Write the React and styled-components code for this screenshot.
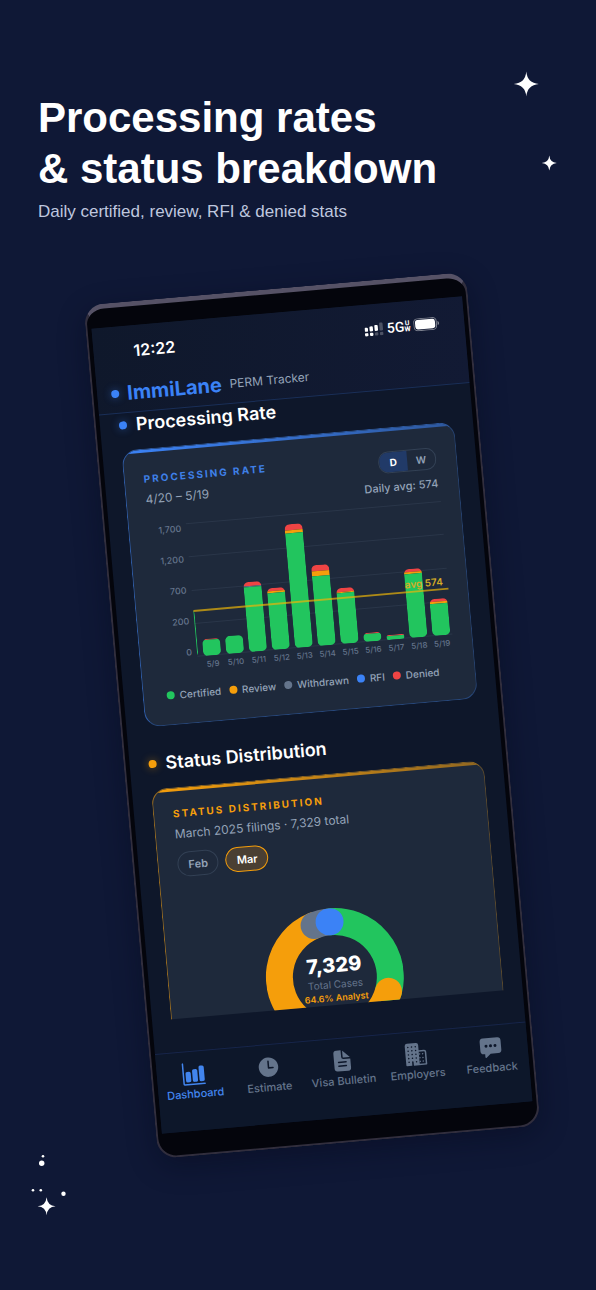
import React from "react";
import styled, { createGlobalStyle, css } from "styled-components";
import {
  IoBarChart,
  IoTime,
  IoDocumentText,
  IoBusiness,
  IoChatboxEllipses,
} from "react-icons/io5";

const c = {
  green: "#22c55e",
  amber: "#f59e0b",
  slate: "#64748b",
  blue: "#3b82f6",
  red: "#ef4444",
  muted: "#94a3b8",
};

const GlobalStyle = createGlobalStyle`
  *, *::before, *::after { box-sizing: border-box; }
  body { margin: 0; background: #0f1836; }
  button { font: inherit; margin: 0; padding: 0; border: 0; background: none; cursor: pointer; }
`;

const Page = styled.main`
  position: relative;
  min-height: 100vh;
  padding: 92px 38px 100px;
  overflow: hidden;
  background: #0f1836;
  font-family: "Liberation Sans", Arial, sans-serif;
`;

const Title = styled.h1`
  margin: 0;
  color: #fff;
  font-size: 42px;
  font-weight: 700;
  line-height: 51px;
`;

const Subtitle = styled.p`
  margin: 6px 0 0;
  color: #bfc7df;
  font-size: 17px;
  line-height: 24px;
`;

const StarsTop = styled.svg`
  position: absolute;
  top: 64px;
  right: 32px;
`;

const StarsBottom = styled.svg`
  position: absolute;
  bottom: 64px;
  left: 24px;
`;

const Stage = styled.div`
  display: flex;
  justify-content: center;
  margin-top: 63px;
  padding-left: 28px;
`;

const Phone = styled.div`
  width: 100%;
  max-width: 384px;
  padding: 19px 4px 23px;
  border: 2px solid #312e3d;
  border-top: 5px solid #565266;
  border-radius: 20px;
  background: #04050c;
  box-shadow: 0 8px 28px rgba(4, 8, 26, 0.4);
  transform: rotate(-5deg);
`;

const Screen = styled.div`
  overflow: hidden;
  background: #0e172a;
  font-family: Inter, sans-serif;
`;

const TopArea = styled.header`
  border-bottom: 1px solid #1a2f58;
  background: linear-gradient(100deg, #0f182b, #121a34);
`;

const StatusBar = styled.div`
  display: flex;
  align-items: center;
  justify-content: space-between;
  height: 49px;
  padding: 0 25px 0 40px;
  color: #fff;
`;

const Clock = styled.span`
  font-size: 16px;
  font-weight: 600;
  line-height: 20px;
`;

const StatusIcons = styled.div`
  display: flex;
  align-items: center;
  gap: 3px;
`;

const Network = styled.span`
  display: flex;
  align-items: center;
  font-family: Roboto, sans-serif;
  font-size: 14px;
  font-weight: 500;
  line-height: 16px;
`;

const NetworkBand = styled.span`
  display: flex;
  flex-direction: column;
  align-items: center;
  font-size: 7px;
  font-weight: 700;
  line-height: 6px;
`;

const Brand = styled.div`
  display: flex;
  align-items: center;
  height: 37px;
  padding: 0 14px 2px;
`;

const Dot = styled.span`
  flex: none;
  width: 8px;
  height: 8px;
  border-radius: 50%;
  background: ${(p) => p.$color};
  ${(p) => p.$glow && css`box-shadow: 0 0 8px ${p.$color}77;`}
`;

const BrandName = styled.span`
  margin: 0 8px;
  color: ${c.blue};
  font-size: 20px;
  font-weight: 700;
  line-height: 24px;
`;

const BrandNote = styled.span`
  color: ${c.muted};
  font-size: 12px;
  line-height: 16px;
`;

const Scroll = styled.div`
  height: 608px;
  margin-bottom: 33px;
  padding: 0 19px;
  overflow: hidden;
`;

const SectionTitle = styled.h2`
  display: flex;
  align-items: center;
  gap: 9px;
  margin: 0 0 13px;
  color: #fff;
  font-size: 18px;
  font-weight: 600;
  line-height: 24px;
`;

const Card = styled.section`
  position: relative;
  margin-bottom: 25px;
  padding: ${(p) => p.$top}px 19px 21px;
  overflow: hidden;
  border: 1px solid;
  border-color: ${(p) => `${p.$accent}88 ${p.$accent}48 ${p.$accent}58 ${p.$accent}90`};
  border-radius: 16px;
  background: #1e293b;

  &::before {
    content: "";
    position: absolute;
    inset: 0 0 auto;
    height: 3px;
    background: linear-gradient(90deg, ${(p) => p.$accent}, ${(p) => p.$accent}88);
  }
`;

const CardHead = styled.div`
  display: flex;
  justify-content: space-between;
`;

const CardLabel = styled.h3`
  margin: 0 0 5px;
  color: ${(p) => p.$accent};
  font-size: 10px;
  font-weight: 700;
  letter-spacing: 2px;
  line-height: 16px;
  text-transform: uppercase;
`;

const CardNote = styled.p`
  margin: 0;
  color: ${c.muted};
  font-size: 12px;
  line-height: 16px;
`;

const HeadSide = styled.div`
  display: flex;
  flex-direction: column;
  align-items: flex-end;
  gap: 6px;
  padding: 2px 1px 0 0;
`;

const Toggle = styled.div`
  display: flex;
  width: 58px;
  height: 22px;
  overflow: hidden;
  border: 1px solid #334155;
  border-radius: 10px;
`;

const ToggleButton = styled.button`
  flex: 1;
  background: ${(p) => (p.$on ? "#213a68" : "transparent")};
  color: ${(p) => (p.$on ? "#fff" : c.muted)};
  font-size: 10px;
  font-weight: ${(p) => (p.$on ? 700 : 600)};
`;

const Average = styled.span`
  color: ${c.muted};
  font-size: 11px;
  font-weight: 500;
  line-height: 16px;
`;

const Chart = styled.div`
  display: flex;
  gap: 5px;
  margin-top: 10px;
`;

const YAxis = styled.div`
  display: flex;
  flex-direction: column;
  justify-content: space-between;
  width: 33px;
  height: 134px;
  color: ${c.slate};
  font-size: 9px;
  font-weight: 500;
  line-height: 10px;
  text-align: right;
`;

const PlotColumn = styled.div`
  flex: 1;
  min-width: 0;
`;

const Plot = styled.div`
  position: relative;
  height: 134px;
`;

const GridLines = styled.div`
  position: absolute;
  inset: 0;
  display: flex;
  flex-direction: column;
  justify-content: space-between;

  i {
    height: 1px;
    background: #2a3649;
  }
`;

const Bars = styled.div`
  position: relative;
  display: flex;
  align-items: flex-end;
  justify-content: flex-end;
  gap: 5px;
  height: 134px;
  padding-right: 2px;
  overflow: hidden;
`;

const Bar = styled.div`
  display: flex;
  flex: none;
  flex-direction: column;
  width: 18px;
  overflow: hidden;
  border-radius: 5px;
`;

const Segment = styled.span`
  flex: none;
  background: ${(p) => p.$color};
`;

const AverageLine = styled.div`
  position: absolute;
  right: 0;
  bottom: 45px;
  left: 0;
  padding-right: 5px;
  border-bottom: 2px solid rgba(234, 179, 8, 0.7);
  color: #d6ac26;
  font-size: 10px;
  font-weight: 600;
  line-height: 14px;
  text-align: right;
`;

const XAxis = styled.div`
  display: flex;
  justify-content: flex-end;
  gap: 5px;
  margin-top: 2px;
  padding-right: 2px;
`;

const XLabel = styled.span`
  display: flex;
  justify-content: center;
  width: 18px;
  color: ${c.slate};
  font-size: 8px;
  font-weight: 500;
  line-height: 12px;
  white-space: nowrap;
`;

const Legend = styled.ul`
  display: flex;
  gap: 8px;
  margin: 14px 0 0;
  padding: 0 0 0 4px;
  list-style: none;
`;

const LegendItem = styled.li`
  display: flex;
  align-items: center;
  gap: 5px;
  color: ${c.muted};
  font-size: 10px;
  font-weight: 500;
  line-height: 16px;
`;

const Pills = styled.div`
  display: flex;
  gap: 7px;
  margin-top: 10px;
`;

const Pill = styled.button`
  height: 25px;
  padding: 0 10px;
  border: 1px solid ${(p) => (p.$on ? c.amber : "#334155")};
  border-radius: 13px;
  background: ${(p) => (p.$on ? "#4a3f33" : "transparent")};
  color: ${(p) => (p.$on ? "#fff" : c.muted)};
  font-size: 11px;
  font-weight: 600;
`;

const DonutBox = styled.div`
  display: grid;
  place-items: center;
  margin-top: 44px;

  > * {
    grid-area: 1 / 1;
  }
`;

const DonutText = styled.div`
  display: flex;
  flex-direction: column;
  align-items: center;
  padding-top: 4px;
`;

const DonutValue = styled.strong`
  color: #fff;
  font-size: 20px;
  font-weight: 800;
  line-height: 24px;
`;

const DonutCaption = styled.span`
  color: ${c.slate};
  font-size: 10px;
  line-height: 14px;
`;

const DonutShare = styled.span`
  color: ${c.amber};
  font-size: 9px;
  font-weight: 600;
  line-height: 14px;
`;

const TabBar = styled.nav`
  display: flex;
  height: 80px;
  padding-top: 10px;
  border-top: 1px solid #17254a;
  background: #0d172a;
`;

const Tab = styled.button`
  display: flex;
  flex: 1 0 0;
  flex-direction: column;
  align-items: center;
  min-width: 0;
  height: 40px;
  color: ${(p) => (p.$on ? "#4285ee" : "#64748b")};
  font-size: 11px;
  font-weight: 500;
  line-height: 14px;
  white-space: nowrap;

  svg {
    flex: none;
    width: 24px;
    height: 24px;
    margin-bottom: 1px;
  }
`;

const bars = [
  { green: 48 },
  { day: "5/9", green: 16, red: 1 },
  { day: "5/10", green: 18 },
  { day: "5/11", green: 65, slate: 1, red: 4 },
  { day: "5/12", green: 57, amber: 2, red: 3 },
  { day: "5/13", green: 115, amber: 3, red: 6 },
  { day: "5/14", green: 70, amber: 5, red: 6 },
  { day: "5/15", green: 51, amber: 1, red: 4 },
  { day: "5/16", green: 8, red: 1 },
  { day: "5/17", green: 4, red: 1 },
  { day: "5/18", green: 64, amber: 2, red: 3 },
  { day: "5/19", green: 32, amber: 2, red: 3 },
];

const legend = [
  ["Certified", c.green],
  ["Review", c.amber],
  ["Withdrawn", c.slate],
  ["RFI", c.blue],
  ["Denied", c.red],
];

const tabs = [
  ["Dashboard", IoBarChart],
  ["Estimate", IoTime],
  ["Visa Bulletin", IoDocumentText],
  ["Employers", IoBusiness],
  ["Feedback", IoChatboxEllipses],
];

const arcs = [
  { color: c.green, from: 0, to: 110 },
  { color: c.amber, from: 110, to: 342 },
  { color: c.slate, from: 343, to: 358 },
  { color: c.blue, from: 359, to: 360 },
];

function star(x, y, r) {
  const k = r * 0.08;
  return `M${x} ${y - r}Q${x + k} ${y - k} ${x + r} ${y}Q${x + k} ${y + k} ${x} ${y + r}Q${x - k} ${y + k} ${x - r} ${y}Q${x - k} ${y - k} ${x} ${y - r}Z`;
}

function SignalIcon() {
  const heights = [4, 5, 6, 8];
  return (
    <svg width="19" height="14" viewBox="0 0 19 14" fill="#fff" aria-hidden="true">
      {heights.map((h, i) => (
        <g key={i}>
          <rect x={i * 5} y={9 - h} width="3.4" height={h} rx="1" opacity={i > 2 ? 0.25 : 1} />
          <rect x={i * 5} y="10.4" width="3.4" height="3.2" rx="1" opacity={i > 1 ? 0.25 : 1} />
        </g>
      ))}
    </svg>
  );
}

function BatteryIcon() {
  return (
    <svg width="26" height="13" viewBox="0 0 26 13" fill="none" aria-hidden="true">
      <rect x="0.5" y="0.5" width="22.6" height="12" rx="3.8" stroke="#fff" strokeOpacity="0.45" />
      <rect x="1.8" y="1.8" width="20" height="9.4" rx="2.6" fill="#fff" />
      <path d="M24.3 4.5v4c.9-.3 1.4-1.1 1.4-2s-.5-1.7-1.4-2Z" fill="#fff" fillOpacity="0.5" />
    </svg>
  );
}

function Donut() {
  const r = 55.5;
  const point = (deg) => {
    const a = ((deg - 90) * Math.PI) / 180;
    return `${69 + r * Math.cos(a)} ${69 + r * Math.sin(a)}`;
  };
  return (
    <svg width="138" height="138" viewBox="0 0 138 138" fill="none" aria-hidden="true">
      {arcs.map((a) => (
        <path
          key={a.color}
          d={`M${point(a.from)}A${r} ${r} 0 ${a.to - a.from > 180 ? 1 : 0} 1 ${point(a.to)}`}
          stroke={a.color}
          strokeWidth="27"
          strokeLinecap="round"
        />
      ))}
    </svg>
  );
}

export default function App() {
  return (
    <Page>
      <GlobalStyle />
      <StarsTop width="60" height="120" viewBox="0 0 60 120" fill="#fff" aria-hidden="true">
        <path d={star(22.3, 20, 12.5)} />
        <path d={star(45.3, 99, 7.5)} />
      </StarsTop>
      <StarsBottom width="50" height="76" viewBox="0 0 50 76" fill="#fff" aria-hidden="true">
        <circle cx="19" cy="6.3" r="1.3" />
        <circle cx="17.7" cy="13.2" r="2.7" />
        <circle cx="9" cy="40.2" r="1.3" />
        <circle cx="16.8" cy="40.2" r="1.3" />
        <circle cx="39.5" cy="43.8" r="2.2" />
        <path d={star(22.6, 56.3, 9)} />
      </StarsBottom>

      <Title>
        Processing rates
        <br />
        &amp; status breakdown
      </Title>
      <Subtitle>Daily certified, review, RFI &amp; denied stats</Subtitle>

      <Stage>
        <Phone>
          <Screen>
            <TopArea>
              <StatusBar>
                <Clock>12:22</Clock>
                <StatusIcons>
                  <SignalIcon />
                  <Network>
                    5G
                    <NetworkBand>
                      <span>U</span>
                      <span>W</span>
                    </NetworkBand>
                  </Network>
                  <BatteryIcon />
                </StatusIcons>
              </StatusBar>
              <Brand>
                <Dot $color={c.blue} $glow />
                <BrandName>ImmiLane</BrandName>
                <BrandNote>PERM Tracker</BrandNote>
              </Brand>
            </TopArea>

            <Scroll>
              <SectionTitle>
                <Dot $color={c.blue} $glow />
                Processing Rate
              </SectionTitle>
              <Card $accent={c.blue} $top={21}>
                <CardHead>
                  <div>
                    <CardLabel $accent="#3f80e8">Processing Rate</CardLabel>
                    <CardNote>4/20 – 5/19</CardNote>
                  </div>
                  <HeadSide>
                    <Toggle>
                      <ToggleButton type="button" $on>D</ToggleButton>
                      <ToggleButton type="button">W</ToggleButton>
                    </Toggle>
                    <Average>Daily avg: 574</Average>
                  </HeadSide>
                </CardHead>
                <Chart>
                  <YAxis>
                    {["1,700", "1,200", "700", "200", "0"].map((v) => (
                      <span key={v}>{v}</span>
                    ))}
                  </YAxis>
                  <PlotColumn>
                    <Plot>
                      <GridLines>
                        <i /><i /><i /><i /><i />
                      </GridLines>
                      <Bars>
                        {bars.map((b, i) => (
                          <Bar key={i}>
                            {["red", "slate", "amber", "green"].map(
                              (k) => b[k] && <Segment key={k} $color={c[k]} style={{ height: b[k] }} />
                            )}
                          </Bar>
                        ))}
                      </Bars>
                      <AverageLine>avg 574</AverageLine>
                    </Plot>
                    <XAxis>
                      {bars.slice(1).map((b) => (
                        <XLabel key={b.day}>{b.day}</XLabel>
                      ))}
                    </XAxis>
                  </PlotColumn>
                </Chart>
                <Legend>
                  {legend.map(([name, color]) => (
                    <LegendItem key={name}>
                      <Dot $color={color} />
                      {name}
                    </LegendItem>
                  ))}
                </Legend>
              </Card>

              <SectionTitle>
                <Dot $color={c.amber} $glow />
                Status Distribution
              </SectionTitle>
              <Card $accent={c.amber} $top={17}>
                <CardLabel $accent={c.amber}>Status Distribution</CardLabel>
                <CardNote>March 2025 filings · 7,329 total</CardNote>
                <Pills>
                  <Pill type="button">Feb</Pill>
                  <Pill type="button" $on>Mar</Pill>
                </Pills>
                <DonutBox>
                  <Donut />
                  <DonutText>
                    <DonutValue>7,329</DonutValue>
                    <DonutCaption>Total Cases</DonutCaption>
                    <DonutShare>64.6% Analyst</DonutShare>
                  </DonutText>
                </DonutBox>
              </Card>
            </Scroll>

            <TabBar>
              {tabs.map(([name, Icon], i) => (
                <Tab key={name} type="button" $on={i === 0}>
                  <Icon />
                  {name}
                </Tab>
              ))}
            </TabBar>
          </Screen>
        </Phone>
      </Stage>
    </Page>
  );
}
